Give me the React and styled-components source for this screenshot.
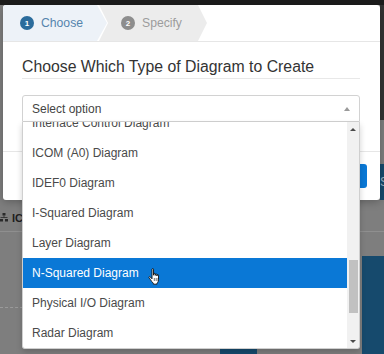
import React from "react";
import styled, { createGlobalStyle } from "styled-components";

const Global = createGlobalStyle`
  html, body { margin: 0; padding: 0; }
  body { font-family: "Liberation Sans", Arial, sans-serif; background: #7e7e7e; }
  * { box-sizing: border-box; }
`;

const Screen = styled.div`
  position: relative;
  width: 384px;
  height: 354px;
  overflow: hidden;
`;

/* ---------- background application (dimmed) ---------- */
const AppFrame = styled.div`
  display: flex;
  flex-direction: column;
  width: 384px;
  height: 354px;
  background: #7e7e7e;
`;
const AppTopBar = styled.div`
  height: 5px;
  background: #1c1c1c;
`;
const AppRow = styled.div`
  display: flex;
  justify-content: flex-end;
  height: ${(p) => p.$h}px;
`;
const EdgeBlock = styled.div`
  width: 4px;
  background: ${(p) => p.$bg};
  overflow: hidden;
  color: #9fb4c4;
  font-size: 12px;
  line-height: 36px;
  white-space: nowrap;
`;
const LabelRow = styled.div`
  display: flex;
  align-items: center;
  gap: 4px;
  height: 32px;
  padding: 4px 0 0 0;
  border-bottom: 1px solid #8f8f8f;
  color: #1e1e1e;
  font-size: 11px;
  font-weight: bold;
`;
const AppContent = styled.div`
  flex: 1;
  display: grid;
  grid-template-columns: 220px 37px 105px 22px;
`;
const DashedRule = styled.div`
  margin-top: 75px;
  height: 0;
  border-top: 1px dashed #9a9a9a;
`;
const BluePanel = styled.div`
  margin-top: ${(p) => p.$top}px;
  background: #164a6d;
`;

/* ---------- modal ---------- */
const Modal = styled.div`
  position: absolute;
  left: 3px;
  top: 5px;
  width: 377px;
  height: 195px;
  background: #fff;
  border-radius: 3px;
  display: flex;
  flex-direction: column;
  box-shadow: 0 2px 8px rgba(0, 0, 0, 0.25);
`;
const Steps = styled.div`
  display: flex;
  height: 37px;
  border-bottom: 1px solid #e6e6e6;
  border-radius: 3px 3px 0 0;
  overflow: hidden;
`;
const Step = styled.div`
  display: flex;
  align-items: center;
  gap: 7px;
  height: 36px;
  width: ${(p) => p.$w}px;
  margin-left: ${(p) => p.$ml || 0}px;
  padding-left: ${(p) => p.$pl}px;
  background: ${(p) => (p.$active ? "#edf2f8" : "#ececec")};
  clip-path: ${(p) =>
    p.$first
      ? "polygon(0 0, 94px 0, 104px 50%, 94px 100%, 0 100%)"
      : "polygon(0 0, 99px 0, 108px 50%, 99px 100%, 0 100%, 9px 50%)"};
  font-size: 12.2px;
  color: ${(p) => (p.$active ? "#5584ad" : "#9c9c9c")};
`;
const StepNum = styled.span`
  display: inline-flex;
  align-items: center;
  justify-content: center;
  width: 14px;
  height: 14px;
  border-radius: 50%;
  background: ${(p) => (p.$active ? "#2b6c9c" : "#8d8d8d")};
  color: #fff;
  font-size: 8px;
  font-weight: bold;
`;
const Body = styled.div`
  padding: 0 20px 0 19px;
`;
const Title = styled.h4`
  margin: 15px 0 0;
  padding-bottom: 1px;
  font-size: 15.8px;
  line-height: 20px;
  font-weight: normal;
  color: #333;
  border-bottom: 1px solid #e8e8e8;
`;
const SelectWrap = styled.div`
  position: relative;
  margin-top: 16px;
`;
const SelectBox = styled.div`
  display: flex;
  align-items: center;
  justify-content: space-between;
  height: 27px;
  padding: 0 9px 0 9px;
  border: 1px solid #d2d2d2;
  border-radius: 3px 3px 0 0;
  font-size: 12px;
  color: #444;
`;
const Caret = styled.span`
  width: 0;
  height: 0;
  border-left: 3.5px solid transparent;
  border-right: 3.5px solid transparent;
  border-bottom: ${(p) => (p.$dark ? "3px solid #4a4a4a" : "4px solid #9a9a9a")};
  ${(p) => p.$down && "border-bottom: none; border-top: 3px solid #4a4a4a;"}
`;
const Dropdown = styled.div`
  position: absolute;
  left: 0;
  top: 100%;
  width: 100%;
  height: 227px;
  display: flex;
  background: #fff;
  border: 1px solid #cfcfcf;
  border-top: none;
  border-radius: 0 0 3px 3px;
  box-shadow: 0 3px 6px rgba(0, 0, 0, 0.18);
  overflow: hidden;
  z-index: 2;
`;
const Viewport = styled.div`
  flex: 1;
  overflow: hidden;
`;
const Options = styled.ul`
  list-style: none;
  margin: -14px 0 0;
  padding: 0;
`;
const Option = styled.li`
  display: flex;
  align-items: center;
  gap: 9px;
  height: 30px;
  padding-left: 9px;
  font-size: 12px;
  color: ${(p) => (p.$hl ? "#fff" : "#4a4a4a")};
  background: ${(p) => (p.$hl ? "#0a78d6" : "transparent")};
`;
const CursorSlot = styled.span`
  display: inline-flex;
  margin-top: 6px;
`;
const Scrollbar = styled.div`
  width: 12px;
  display: flex;
  flex-direction: column;
  background: #f1f1f1;
`;
const ScrollArrow = styled.div`
  height: 14px;
  display: flex;
  align-items: center;
  justify-content: center;
`;
const ScrollTrack = styled.div`
  flex: 1;
  display: flex;
  flex-direction: column;
  padding: 0 1px 0 2px;
`;
const Thumb = styled.div`
  margin-top: ${(p) => p.$top}px;
  height: ${(p) => p.$h}px;
  background: #c1c1c1;
`;
const Footer = styled.div`
  margin-top: 29px;
  display: flex;
  justify-content: flex-end;
  padding: 12px 13px 12px 0;
  border-top: 1px solid #e6e6e6;
`;
const PrimaryButton = styled.div`
  width: 80px;
  height: 24px;
  border-radius: 3px;
  background: #0a78d6;
`;

const SitemapIcon = () => (
  <svg width="8" height="9" viewBox="0 0 8 9" fill="#2a2a2a">
    <rect x="2.5" y="0" width="3" height="2.5" />
    <rect x="3.6" y="2.5" width="0.8" height="2" />
    <rect x="0.5" y="4" width="7" height="0.8" />
    <rect x="0" y="6" width="3" height="2.5" />
    <rect x="5" y="6" width="3" height="2.5" />
  </svg>
);

const HandCursor = () => (
  <svg width="13" height="19" viewBox="0 0 13 17">
    <path
      d="M4 1.2c0-.7 1.5-.7 1.5 0v6l.2-1.3c0-.7 1.5-.7 1.5 0v1.5l.2-1c0-.7 1.5-.7 1.5 0v1.6l.2-.8c0-.7 1.4-.7 1.4 0v4.5c0 1.5-.6 2.7-1.5 3.5v1H5.3v-1c-1-.8-2-2.1-3-3.8L1 9.6c-.4-.8.7-1.4 1.3-.7L4 10.8z"
      fill="#fff"
      stroke="#111"
      strokeWidth="0.9"
      strokeLinejoin="round"
    />
    <path d="M6.3 10v3M8.2 10v3M10 10v3" stroke="#111" strokeWidth="0.6" />
  </svg>
);

const options = [
  "Interface Control Diagram",
  "ICOM (A0) Diagram",
  "IDEF0 Diagram",
  "I-Squared Diagram",
  "Layer Diagram",
  "N-Squared Diagram",
  "Physical I/O Diagram",
  "Radar Diagram",
];

export default function App() {
  return (
    <>
      <Global />
      <Screen>
        <AppFrame>
          <AppTopBar />
          <AppRow $h={115}>
            <EdgeBlock $bg="#333333" />
          </AppRow>
          <AppRow $h={44} />
          <AppRow $h={36}>
            <EdgeBlock $bg="#164a6d">Save</EdgeBlock>
          </AppRow>
          <LabelRow>
            <SitemapIcon />
            <span>IC</span>
          </LabelRow>
          <AppContent>
            <DashedRule />
            <BluePanel $top={115} />
            <div />
            <BluePanel $top={24} />
          </AppContent>
        </AppFrame>

        <Modal>
          <Steps>
            <Step $active $first $w={104} $pl={17}>
              <StepNum $active>1</StepNum>
              Choose
            </Step>
            <Step $w={112} $ml={-8} $pl={22}>
              <StepNum>2</StepNum>
              Specify
            </Step>
          </Steps>
          <Body>
            <Title>Choose Which Type of Diagram to Create</Title>
            <SelectWrap>
              <SelectBox>
                <span>Select option</span>
                <Caret />
              </SelectBox>
              <Dropdown>
                <Viewport>
                  <Options>
                    {options.map((o) => (
                      <Option key={o} $hl={o === "N-Squared Diagram"}>
                        {o}
                        {o === "N-Squared Diagram" && (
                          <CursorSlot>
                            <HandCursor />
                          </CursorSlot>
                        )}
                      </Option>
                    ))}
                  </Options>
                </Viewport>
                <Scrollbar>
                  <ScrollArrow>
                    <Caret $dark />
                  </ScrollArrow>
                  <ScrollTrack>
                    <Thumb $top={124} $h={53} />
                  </ScrollTrack>
                  <ScrollArrow>
                    <Caret $dark $down />
                  </ScrollArrow>
                </Scrollbar>
              </Dropdown>
            </SelectWrap>
          </Body>
          <Footer>
            <PrimaryButton />
          </Footer>
        </Modal>
      </Screen>
    </>
  );
}
